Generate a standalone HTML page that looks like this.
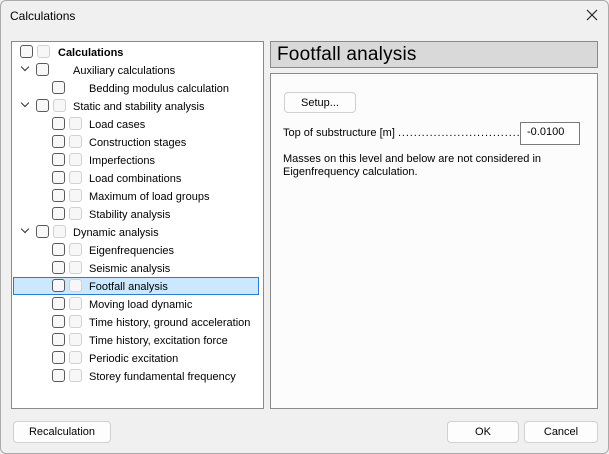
<!DOCTYPE html><html><head><style>
*{margin:0;padding:0;box-sizing:border-box}
body{width:609px;height:454px;background:#f0f0f0;font-family:"Liberation Sans",sans-serif;font-size:11px;color:#000;position:relative;overflow:hidden}
.a{position:absolute;white-space:nowrap}
.win{position:absolute;left:0;top:0;width:609px;height:454px;border:1px solid #aaa;border-radius:6px}
.cb{position:absolute;width:13px;height:13px;border:1px solid #5a5a5a;border-radius:3px;background:#f8f8f8}
.cb2{position:absolute;width:13px;height:13px;border:1px solid #d0d0d0;border-radius:3px;background:#f7f7f7}
.chev{position:absolute;width:6px;height:6px;border-right:1.3px solid #333;border-bottom:1.3px solid #333;transform:rotate(45deg)}
.btn{position:absolute;border:1px solid #d0d0d0;border-radius:4px;background:#fdfdfd;text-align:center;line-height:21px}
.t{position:absolute;line-height:14px;margin-top:2px}
</style></head><body>
<div class="win"></div>
<div class="a" style="left:10px;top:9px;font-size:12px">Calculations</div>
<svg class="a" style="left:586px;top:9px" width="12" height="12"><path d="M1 1L11 11M11 1L1 11" stroke="#222" stroke-width="1.2"/></svg>
<div class="a" style="left:11px;top:41px;width:253px;height:368px;background:#fff;border:1px solid #8a8a8a"></div>
<div class="a" style="left:13px;top:277px;width:246px;height:18px;background:#cce8ff;border:1px solid #2b7bd0"></div>
<div class="a" style="left:270px;top:41px;width:328px;height:27px;background:#d9d9d9;border:1px solid #8a8a8a;font-size:19px;line-height:26px;padding-left:6px;letter-spacing:0.2px">Footfall analysis</div>
<div class="a" style="left:270px;top:73px;width:328px;height:336px;background:#fcfcfc;border:1px solid #8a8a8a"></div>
<div class="btn" style="left:284px;top:92px;width:72px;height:21px;line-height:20px">Setup...</div>
<div class="a" style="left:283px;top:127px">Top of substructure [m] <span style="letter-spacing:0.9px">.................................</span></div>
<div class="a" style="left:520px;top:122px;width:60px;height:23px;background:#fff;border:1px solid #7a7a7a;padding:3px 0 0 6px">-0.0100</div>
<div class="a" style="left:283px;top:153px;line-height:13px">Masses on this level and below are not considered in<br>Eigenfrequency calculation.</div>
<div class="btn" style="left:13px;top:421px;width:98px;height:22px">Recalculation</div>
<div class="btn" style="left:447px;top:421px;width:72px;height:22px">OK</div>
<div class="btn" style="left:524px;top:421px;width:74px;height:22px">Cancel</div>

<div class="cb" style="left:20px;top:45px"></div><div class="cb2" style="left:37px;top:45px"></div><div class="t" style="left:58px;top:44px;font-weight:bold">Calculations</div>
<div class="chev" style="left:22px;top:64px"></div><div class="cb" style="left:36px;top:63px"></div><div class="t" style="left:73px;top:62px">Auxiliary calculations</div>
<div class="cb" style="left:52px;top:81px"></div><div class="t" style="left:89px;top:80px">Bedding modulus calculation</div>
<div class="chev" style="left:22px;top:100px"></div><div class="cb" style="left:36px;top:99px"></div><div class="cb2" style="left:53px;top:99px"></div><div class="t" style="left:73px;top:98px">Static and stability analysis</div>
<div class="cb" style="left:52px;top:117px"></div><div class="cb2" style="left:69px;top:117px"></div><div class="t" style="left:89px;top:116px">Load cases</div>
<div class="cb" style="left:52px;top:135px"></div><div class="cb2" style="left:69px;top:135px"></div><div class="t" style="left:89px;top:134px">Construction stages</div>
<div class="cb" style="left:52px;top:153px"></div><div class="cb2" style="left:69px;top:153px"></div><div class="t" style="left:89px;top:152px">Imperfections</div>
<div class="cb" style="left:52px;top:171px"></div><div class="cb2" style="left:69px;top:171px"></div><div class="t" style="left:89px;top:170px">Load combinations</div>
<div class="cb" style="left:52px;top:189px"></div><div class="cb2" style="left:69px;top:189px"></div><div class="t" style="left:89px;top:188px">Maximum of load groups</div>
<div class="cb" style="left:52px;top:207px"></div><div class="cb2" style="left:69px;top:207px"></div><div class="t" style="left:89px;top:206px">Stability analysis</div>
<div class="chev" style="left:22px;top:226px"></div><div class="cb" style="left:36px;top:225px"></div><div class="cb2" style="left:53px;top:225px"></div><div class="t" style="left:73px;top:224px">Dynamic analysis</div>
<div class="cb" style="left:52px;top:243px"></div><div class="cb2" style="left:69px;top:243px"></div><div class="t" style="left:89px;top:242px">Eigenfrequencies</div>
<div class="cb" style="left:52px;top:261px"></div><div class="cb2" style="left:69px;top:261px"></div><div class="t" style="left:89px;top:260px">Seismic analysis</div>
<div class="cb" style="left:52px;top:279px"></div><div class="cb2" style="left:69px;top:279px"></div><div class="t" style="left:89px;top:278px">Footfall analysis</div>
<div class="cb" style="left:52px;top:297px"></div><div class="cb2" style="left:69px;top:297px"></div><div class="t" style="left:89px;top:296px">Moving load dynamic</div>
<div class="cb" style="left:52px;top:315px"></div><div class="cb2" style="left:69px;top:315px"></div><div class="t" style="left:89px;top:314px">Time history, ground acceleration</div>
<div class="cb" style="left:52px;top:333px"></div><div class="cb2" style="left:69px;top:333px"></div><div class="t" style="left:89px;top:332px">Time history, excitation force</div>
<div class="cb" style="left:52px;top:351px"></div><div class="cb2" style="left:69px;top:351px"></div><div class="t" style="left:89px;top:350px">Periodic excitation</div>
<div class="cb" style="left:52px;top:369px"></div><div class="cb2" style="left:69px;top:369px"></div><div class="t" style="left:89px;top:368px">Storey fundamental frequency</div>
</body></html>
